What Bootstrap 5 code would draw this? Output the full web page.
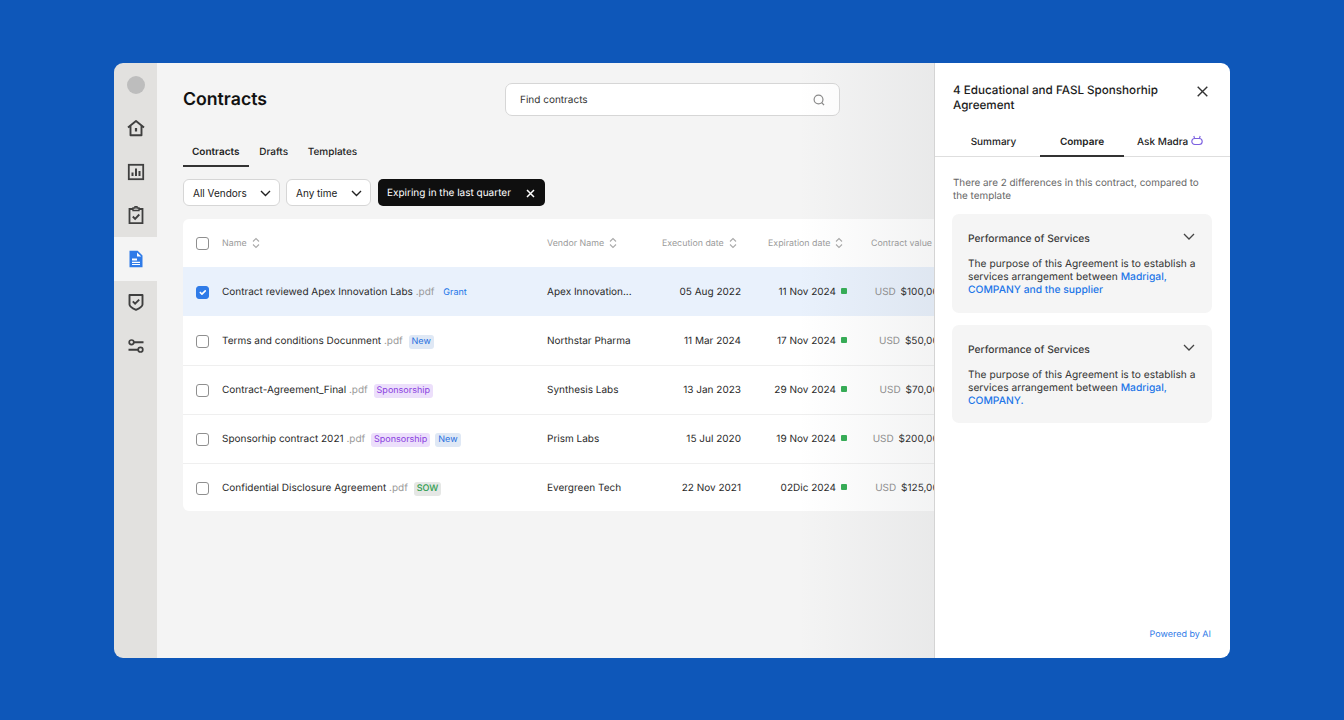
<!DOCTYPE html>
<html lang="en">
<head>
    <meta charset="UTF-8">
    <meta name="viewport" content="width=device-width, initial-scale=1.0">
    <title>Contracts</title>
    <link href="https://cdn.jsdelivr.net/npm/bootstrap@5.3.0/dist/css/bootstrap.min.css" rel="stylesheet">
    <script src="https://cdn.jsdelivr.net/npm/bootstrap@5.3.0/dist/js/bootstrap.bundle.min.js"></script>
    <style>
        html, body {
            height: 100%;
        }
        body {
            background-color: #0e57b9;
            font-family: Inter, "Liberation Sans", sans-serif;
            font-size: 10px;
            color: #222;
            padding-top: 63px;
            overflow: hidden;
            text-rendering: geometricPrecision;
        }
        .app-window {
            width: 1116px;
            height: 595px;
            margin-left: 114px;
            border-radius: 9px;
            overflow: hidden;
        }
        .side-rail {
            width: 43px;
            background-color: #e2e1df;
            flex: none;
        }
        .rail-item {
            height: 43.5px;
            color: #3f3f3f;
        }
        .rail-item.active-item {
            background-color: #f4f4f4;
            color: #2f7be8;
        }
        .rail-avatar {
            width: 18px;
            height: 18px;
            background-color: #bdbdbd;
            border-radius: 50%;
        }
        .main-area {
            flex: 1 1 auto;
            min-width: 0;
            background-color: #f4f4f4;
            padding: 20px 0 0 26px;
            overflow: hidden;
        }
        .main-shade {
            position: absolute;
            top: 0;
            right: 0;
            bottom: 0;
            width: 135px;
            pointer-events: none;
            background: linear-gradient(to right, rgba(120, 125, 130, 0), rgba(120, 125, 130, .09));
        }
        .page-title {
            width: 322px;
            font-size: 17.7px;
            font-weight: 600;
            color: #111;
            line-height: 32px;
            margin: 0;
            flex: none;
        }
        .search-box {
            width: 335px;
            height: 33px;
            background: #fff;
            border: 1px solid #d6d6d6;
            border-radius: 7px;
            padding: 1px 14px 0 14px;
            color: #333;
        }
        .main-tabs {
            margin-top: 24px;
        }
        .main-tabs .nav-link {
            color: #222;
            font-size: 10px;
            line-height: 14px;
            padding: 5px 9px 5px;
            height: 27px;
            font-weight: 500;
            border-bottom: 2px solid transparent;
        }
        .main-tabs .nav-item + .nav-item {
            margin-left: 1.7px;
        }
        .main-tabs .nav-link.active {
            border-bottom-color: #333;
            font-weight: 600;
        }
        .filter-row {
            margin-top: 12px;
            margin-bottom: 13px;
            gap: 6px;
        }
        .filter-btn {
            height: 27px;
            font-size: 10px;
            padding: 1px 8px 0 9px;
            background: #fff;
            border: 1px solid #d6d6d6;
            border-radius: 6px;
            color: #222;
        }
        .vendors-btn { width: 97px; }
        .time-btn { width: 85px; }
        .chip-dark {
            width: 167px;
            height: 27px;
            background: #0f0f0f;
            color: #fff;
            border-radius: 5px;
            padding: 1px 10px 0 9px;
            margin-left: 1px;
        }
        .table-card {
            width: 800px;
            background: #fff;
            border-radius: 6px 0 0 6px;
        }
        .contracts-table {
            table-layout: fixed;
            width: 800px;
            margin: 0;
            font-size: 10px;
            --bs-table-bg: transparent;
        }
        .contracts-table th,
        .contracts-table td {
            padding: 2px 0 0;
            vertical-align: middle;
            border-bottom: 1px solid #efefef;
            color: #2a2a2a;
            white-space: nowrap;
            height: 49px;
        }
        .contracts-table tr:last-child td {
            border-bottom: 0;
            height: 48px;
        }
        .contracts-table th {
            padding-top: 1px;
            font-weight: 400;
            font-size: 8.85px;
            color: #9a9a9a;
            height: 48px;
            border-bottom: 0;
        }
        .contracts-table tr.selected-row td {
            background-color: #e9f1fc;
            border-bottom: 0;
        }
        .contracts-table .form-check-input {
            width: 13px;
            height: 13px;
            margin: 0 0 0 13px;
            display: block;
            border: 1px solid #8f8f8f;
            border-radius: 3px;
        }
        .contracts-table .form-check-input:checked {
            background-color: #2f7be8;
            border-color: #2f7be8;
        }
        .head-exec { padding-left: 22px !important; }
        .head-exp { padding-left: 26px !important; }
        .head-value { padding-left: 23px !important; }
        .sort-mark {
            margin-left: 5px;
        }
        .file-ext {
            color: #9a9a9a;
        }
        .tag-pill {
            display: inline-block;
            font-size: 9px;
            line-height: 14px;
            height: 14px;
            padding: 0 3px;
            border-radius: 3px;
            margin-left: 3px;
        }
        .tag-pill + .tag-pill {
            margin-left: 5px;
        }
        .tag-new { background: #dfe8f5; color: #1f6fe0; }
        .tag-grant { color: #2276e8; }
        .tag-sponsor { background: #ecdffb; color: #8a3ee0; }
        .tag-sow { background: #e5e7e5; color: #2f9e4f; font-weight: 500; }
        .date-cell { text-align: right; }
        .exec-cell { padding-right: 1px !important; }
        .exp-cell { padding-right: 1px !important; }
        .status-dot {
            display: inline-block;
            width: 6px;
            height: 6px;
            background: #35ad55;
            border-radius: 1px;
            margin-left: 5px;
            vertical-align: 1px;
        }
        .value-cell {
            text-align: right;
            padding-right: 38px !important;
        }
        .usd-label {
            color: #8f8f8f;
            margin-right: 2px;
        }
        .detail-panel {
            width: 296px;
            flex: none;
            background: #fff;
            border-left: 1px solid #d4d4d4;
        }
        .detail-head {
            padding: 20px 22px 0 18px;
        }
        .detail-title {
            font-size: 11.65px;
            font-weight: 500;
            line-height: 15px;
            color: #1c1c1c;
            margin: 0;
            width: 225px;
        }
        .close-mark {
            margin-top: 3px;
        }
        .detail-tabs {
            margin-top: 16px;
            border-bottom: 1px solid #dedede;
        }
        .detail-tabs .nav-link {
            font-size: 10px;
            line-height: 14px;
            height: 28px;
            padding: 6px 0 0;
            color: #222;
            font-weight: 500;
            text-align: center;
            border-bottom: 2px solid transparent;
            margin-bottom: -1px;
        }
        .detail-tabs .summary-tab { width: 105px; padding-left: 12px; }
        .detail-tabs .compare-tab { width: 84px; }
        .detail-tabs .ask-tab { width: 106px; padding-right: 14px; }
        .detail-tabs .nav-link.active {
            border-bottom-color: #333;
            font-weight: 600;
        }
        .detail-body {
            padding: 20px 18px 0 17px;
        }
        .diff-intro {
            font-size: 9.9px;
            color: #666;
            line-height: 13px;
            margin: 0 0 11px;
            padding-left: 1px;
        }
        .diff-box {
            background: #f5f5f5;
            border-radius: 7px;
            padding: 18px 16px 0;
            margin-bottom: 12px;
            height: 99px;
            border: 0;
        }
        .diff-box.short-box { height: 98px; }
        .diff-heading {
            font-size: 10.25px;
            font-weight: 500;
            color: #3a3a3a;
            line-height: 15px;
            margin-bottom: 11px;
        }
        .diff-chevron {
            margin: 1px 1px 0 0;
        }
        .diff-text {
            font-size: 10.2px;
            line-height: 13px;
            color: #333;
            margin: 0;
        }
        .diff-link {
            font-size: 10.3px;
            color: #2276e8;
            font-weight: 500;
        }
        .powered-note {
            color: #2f7be8;
            font-size: 9px;
            text-align: right;
            padding: 0 19px 17px 0;
            line-height: 12px;
        }
    </style>
</head>
<body>
    <div class="app-window d-flex">
        <nav class="side-rail d-flex flex-column">
            <div class="rail-item d-flex align-items-center justify-content-center"><span class="rail-avatar"></span></div>
            <div class="rail-item d-flex align-items-center justify-content-center">
                <svg width="20" height="20" viewBox="0 0 20 20" fill="none" stroke="currentColor" stroke-width="1.9" stroke-linejoin="round"><path d="M2 9.500 10 3l8 6.500M4.500 8v9.200h11V8"/><path d="M10 10v3.500" stroke-width="2.200"/></svg>
            </div>
            <div class="rail-item d-flex align-items-center justify-content-center">
                <svg width="20" height="20" viewBox="0 0 20 20" fill="none" stroke="currentColor"><rect x="2.800" y="2.800" width="14.400" height="14.400" stroke-width="1.800"/><path d="M6.500 14v-3.500M10 14V6.500M13.500 14V9" stroke-width="2"/></svg>
            </div>
            <div class="rail-item d-flex align-items-center justify-content-center">
                <svg width="20" height="20" viewBox="0 0 20 20" fill="none" stroke="currentColor" stroke-width="1.800"><path d="M7 4H3.500v14.200h13V4H13"/><path d="M7 5.500V3h2V1.800h2V3h2v2.500z" stroke-width="1.400"/><path d="m6.800 11.500 2.300 2.300 4.200-4.300" stroke-width="1.900"/></svg>
            </div>
            <div class="rail-item active-item d-flex align-items-center justify-content-center">
                <svg width="20" height="20" viewBox="0 0 20 20"><path fill="currentColor" d="M3.500 1.800h8.200l4.800 4.800v11.600h-13z"/><path fill="#fff" d="M11 3.500v4h4.200z"/><path fill="#fff" d="M6 9.500h5v2H6zM6 12.800h8v1.100H6zM6 15h8v1H6z"/></svg>
            </div>
            <div class="rail-item d-flex align-items-center justify-content-center">
                <svg width="20" height="20" viewBox="0 0 20 20" fill="none" stroke="currentColor" stroke-width="1.900"><path d="M3.500 3h13v9.500c0 2.200-3.500 4-6.500 5.300-3-1.300-6.500-3.100-6.500-5.300z" stroke-linejoin="round"/><path d="m6.800 9.300 2.300 2.300 4.100-4"/></svg>
            </div>
            <div class="rail-item d-flex align-items-center justify-content-center">
                <svg width="20" height="20" viewBox="0 0 20 20" fill="none" stroke="currentColor" stroke-width="1.700"><circle cx="5.500" cy="6.300" r="2.300"/><circle cx="14.500" cy="13.700" r="2.300"/><path d="M8 6.300h9.500M2.500 13.700H12" stroke-width="1.900"/></svg>
            </div>
        </nav>

        <main class="main-area position-relative">
            <div class="d-flex align-items-center">
                <h1 class="page-title">Contracts</h1>
                <div class="search-box d-flex align-items-center justify-content-between">
                    <span>Find contracts</span>
                    <svg width="12" height="12" viewBox="0 0 13 13" fill="none" stroke="#8a8a8a" stroke-width="1.300"><circle cx="6" cy="6" r="4.800"/><path d="m9.500 9.500 2.500 2.500"/></svg>
                </div>
            </div>

            <ul class="nav main-tabs">
                <li class="nav-item"><a class="nav-link active" href="#">Contracts</a></li>
                <li class="nav-item"><a class="nav-link" href="#">Drafts</a></li>
                <li class="nav-item"><a class="nav-link" href="#">Templates</a></li>
            </ul>

            <div class="filter-row d-flex">
                <button class="btn filter-btn vendors-btn d-flex align-items-center justify-content-between">All Vendors
                    <svg width="11" height="7" viewBox="0 0 11 7" fill="none" stroke="#222" stroke-width="1.400"><path d="m1 1 4.500 4.500L10 1"/></svg>
                </button>
                <button class="btn filter-btn time-btn d-flex align-items-center justify-content-between">Any time
                    <svg width="11" height="7" viewBox="0 0 11 7" fill="none" stroke="#222" stroke-width="1.400"><path d="m1 1 4.500 4.500L10 1"/></svg>
                </button>
                <div class="chip-dark d-flex align-items-center justify-content-between">
                    <span>Expiring in the last quarter</span>
                    <svg width="9" height="9" viewBox="0 0 9 9" fill="none" stroke="#fff" stroke-width="1.500"><path d="m1 1 7 7M8 1 1 8"/></svg>
                </div>
            </div>

            <div class="table-card">
                <table class="table contracts-table">
                    <colgroup>
                        <col style="width:39px"><col style="width:325px"><col style="width:93px"><col style="width:102px"><col style="width:106px"><col style="width:135px">
                    </colgroup>
                    <thead>
                        <tr>
                            <th><input class="form-check-input" type="checkbox"></th>
                            <th><div class="d-flex align-items-center">Name<svg class="sort-mark" width="8" height="12" viewBox="0 0 8 12" fill="none" stroke="#aaa" stroke-width="1.100"><path d="M1 4.500 4 1.500l3 3M1 7.500l3 3 3-3"/></svg></div></th>
                            <th><div class="d-flex align-items-center">Vendor Name<svg class="sort-mark" width="8" height="12" viewBox="0 0 8 12" fill="none" stroke="#aaa" stroke-width="1.100"><path d="M1 4.500 4 1.500l3 3M1 7.500l3 3 3-3"/></svg></div></th>
                            <th class="head-exec"><div class="d-flex align-items-center">Execution date<svg class="sort-mark" width="8" height="12" viewBox="0 0 8 12" fill="none" stroke="#aaa" stroke-width="1.100"><path d="M1 4.500 4 1.500l3 3M1 7.500l3 3 3-3"/></svg></div></th>
                            <th class="head-exp"><div class="d-flex align-items-center">Expiration date<svg class="sort-mark" width="8" height="12" viewBox="0 0 8 12" fill="none" stroke="#aaa" stroke-width="1.100"><path d="M1 4.500 4 1.500l3 3M1 7.500l3 3 3-3"/></svg></div></th>
                            <th class="head-value">Contract value</th>
                        </tr>
                    </thead>
                    <tbody id="contract-rows"></tbody>
                </table>
            </div>
            <div class="main-shade"></div>
        </main>

        <aside class="detail-panel d-flex flex-column">
            <div class="detail-head d-flex justify-content-between align-items-start">
                <h2 class="detail-title">4 Educational and FASL Sponshorhip Agreement</h2>
                <svg class="close-mark" width="11" height="11" viewBox="0 0 11 11" fill="none" stroke="#333" stroke-width="1.400"><path d="m.7.700 9.600 9.600M10.300.700.7 10.300"/></svg>
            </div>
            <ul class="nav detail-tabs">
                <li class="nav-item"><a class="nav-link summary-tab" href="#">Summary</a></li>
                <li class="nav-item"><a class="nav-link compare-tab active" href="#">Compare</a></li>
                <li class="nav-item"><a class="nav-link ask-tab" href="#">Ask Madra
                    <svg width="12" height="11" viewBox="0 0 12 11" fill="none" stroke="#7b5fe0" stroke-width="1.100" style="vertical-align:-1px"><rect x=".8" y="3.500" width="10.400" height="6" rx="3"/><path d="M3.500 3 2.800 1M8.500 3l.7-2"/></svg>
                </a></li>
            </ul>
            <div class="detail-body flex-grow-1">
                <p class="diff-intro">There are 2 differences in this contract, compared to the template</p>
                <div class="diff-box">
                    <div class="diff-heading d-flex justify-content-between align-items-start">Performance of Services
                        <svg class="diff-chevron" width="12" height="8" viewBox="0 0 12 8" fill="none" stroke="#444" stroke-width="1.300"><path d="m1 1 5 5 5-5"/></svg>
                    </div>
                    <p class="diff-text">The purpose of this Agreement is to establish a services arrangement between <span class="diff-link">Madrigal, COMPANY and the supplier</span></p>
                </div>
                <div class="diff-box short-box">
                    <div class="diff-heading d-flex justify-content-between align-items-start">Performance of Services
                        <svg class="diff-chevron" width="12" height="8" viewBox="0 0 12 8" fill="none" stroke="#444" stroke-width="1.300"><path d="m1 1 5 5 5-5"/></svg>
                    </div>
                    <p class="diff-text">The purpose of this Agreement is to establish a services arrangement between <span class="diff-link">Madrigal, COMPANY.</span></p>
                </div>
            </div>
            <div class="powered-note">Powered by AI</div>
        </aside>
    </div>

    <script>
        const contracts = [
            { name: 'Contract reviewed Apex Innovation Labs', tags: [['Grant', 'tag-grant']], vendor: 'Apex Innovation...', exec: '05 Aug 2022', exp: '11 Nov 2024', value: '$100,000', selected: true },
            { name: 'Terms and conditions Docunment', tags: [['New', 'tag-new']], vendor: 'Northstar Pharma', exec: '11 Mar 2024', exp: '17 Nov 2024', value: '$50,000' },
            { name: 'Contract-Agreement_Final', tags: [['Sponsorship', 'tag-sponsor']], vendor: 'Synthesis Labs', exec: '13 Jan 2023', exp: '29 Nov 2024', value: '$70,000' },
            { name: 'Sponsorhip contract 2021', tags: [['Sponsorship', 'tag-sponsor'], ['New', 'tag-new']], vendor: 'Prism Labs', exec: '15 Jul 2020', exp: '19 Nov 2024', value: '$200,000' },
            { name: 'Confidential Disclosure Agreement', tags: [['SOW', 'tag-sow']], vendor: 'Evergreen Tech', exec: '22 Nov 2021', exp: '02Dic 2024', value: '$125,000' }
        ];

        const rows = document.getElementById('contract-rows');
        contracts.forEach(item => {
            const row = document.createElement('tr');
            if (item.selected) row.className = 'selected-row';
            const tags = item.tags.map(t => `<span class="tag-pill ${t[1]}">${t[0]}</span>`).join('');
            row.innerHTML = `
                <td><input class="form-check-input" type="checkbox" ${item.selected ? 'checked' : ''}></td>
                <td>${item.name} <span class="file-ext">.pdf</span> ${tags}</td>
                <td>${item.vendor}</td>
                <td class="date-cell exec-cell">${item.exec}</td>
                <td class="date-cell exp-cell">${item.exp}<span class="status-dot"></span></td>
                <td class="value-cell"><span class="usd-label">USD</span> ${item.value}</td>
            `;
            rows.appendChild(row);
        });
    </script>
</body>
</html>
